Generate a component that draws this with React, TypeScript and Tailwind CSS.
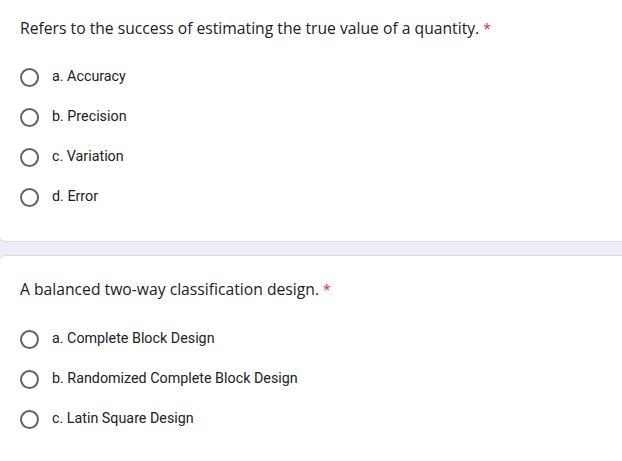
import React from 'react';

const questions = [
  {
    title: 'Refers to the success of estimating the true value of a quantity.',
    options: ['a. Accuracy', 'b. Precision', 'c. Variation', 'd. Error'],
  },
  {
    title: 'A balanced two-way classification design.',
    options: ['a. Complete Block Design', 'b. Randomized Complete Block Design', 'c. Latin Square Design'],
  },
];

function Radio() {
  return <span className="block w-[19px] h-[19px] rounded-full border-2 border-[#5f6368] shrink-0" />;
}

function Option({ label }: { label: string }) {
  return (
    <div className="flex items-center h-10 pl-[20px]">
      <Radio />
      <span className="ml-[13px] text-[14.3px] text-[#202124] font-['Roboto',sans-serif]">{label}</span>
    </div>
  );
}

export default function App() {
  const [first, second] = questions;
  return (
    <div className="w-[622px] h-[461px] overflow-hidden bg-[#f0ebf8]">
      <div className="bg-white h-[242px] border-b border-[#dadce0] rounded-bl-md">
        <div className="pt-[17px] pl-[20px] h-[57px] text-[15.7px] text-[#202124] font-['Open_Sans',sans-serif]">
          {first.title} <span className="text-[#d93025] text-[14px]">*</span>
        </div>
        {first.options.map((o) => (
          <Option key={o} label={o} />
        ))}
      </div>
      <div className="mt-[13px] bg-white h-[220px] border-t border-[#dadce0] rounded-tl-md">
        <div className="pt-[22px] pl-[20px] h-[63px] text-[15.7px] text-[#202124] font-['Open_Sans',sans-serif]">
          {second.title} <span className="text-[#d93025] text-[14px]">*</span>
        </div>
        {second.options.map((o) => (
          <Option key={o} label={o} />
        ))}
      </div>
    </div>
  );
}
